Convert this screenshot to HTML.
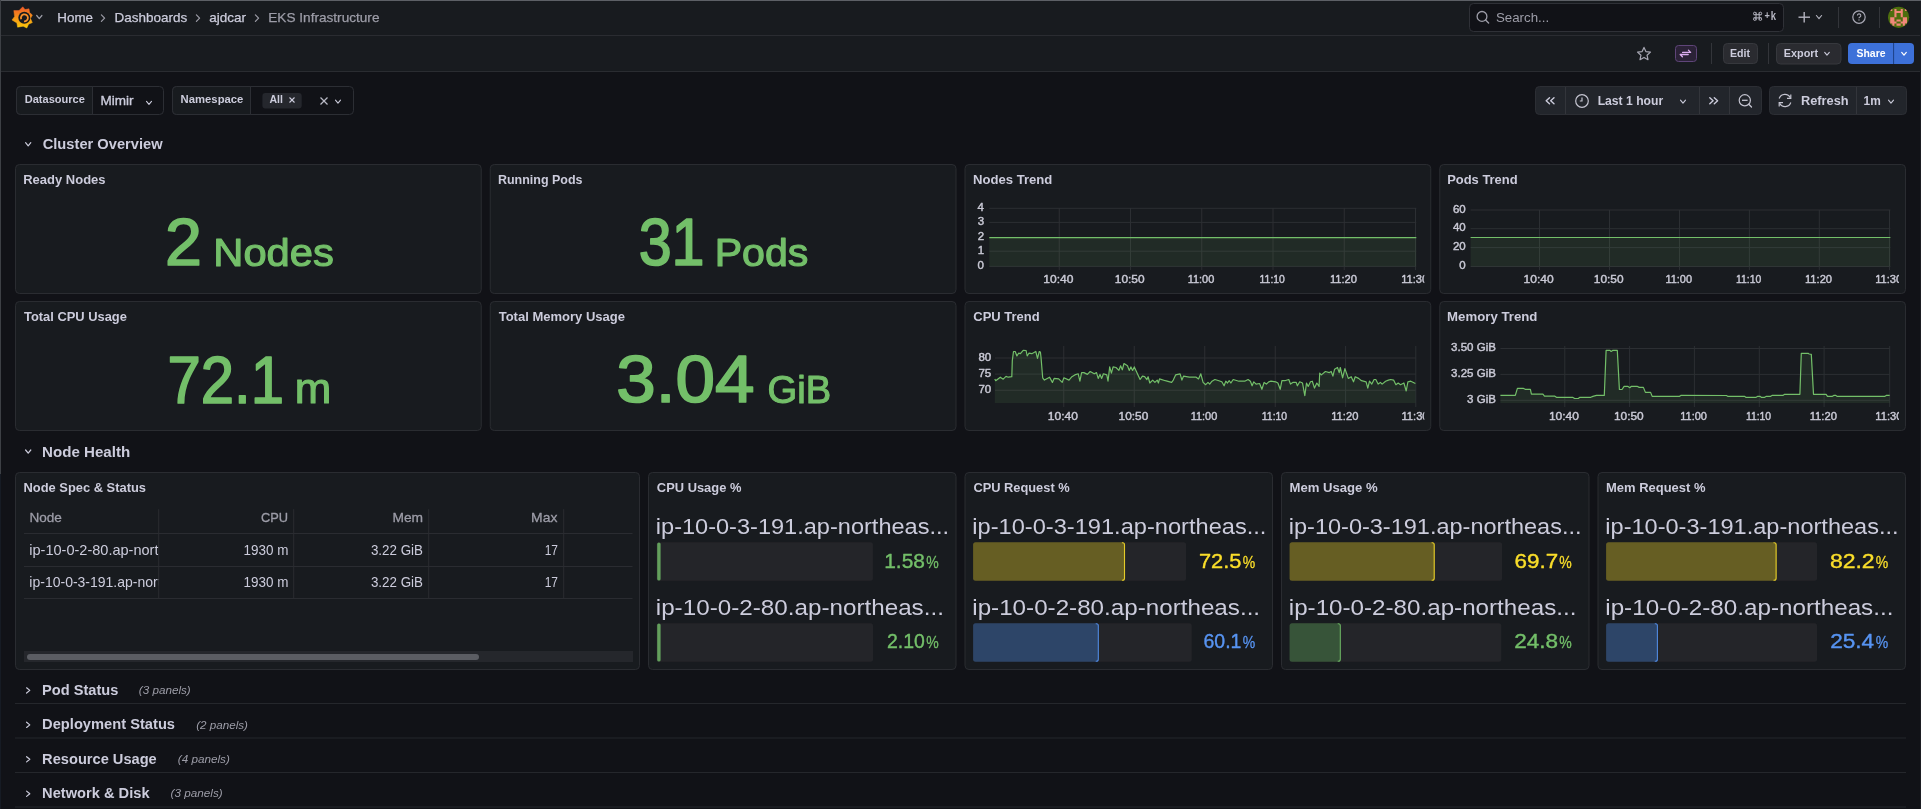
<!DOCTYPE html>
<html><head><meta charset="utf-8"><title>EKS Infrastructure - Dashboards - Grafana</title>
<style>
html,body{margin:0;padding:0;background:#111217;width:1921px;height:809px;overflow:hidden}
svg{display:block;font-family:"Liberation Sans", sans-serif;will-change:transform}
</style></head><body>
<svg width="1921" height="809" viewBox="0 0 1921 809">
<rect x="0" y="0" width="1921" height="809" fill="#111217"/>
<rect x="0" y="0" width="1921" height="71" fill="#181b1f"/>
<line x1="0" y1="35.5" x2="1921" y2="35.5" stroke="#2a2c31" stroke-width="1"/>
<line x1="0" y1="71.5" x2="1921" y2="71.5" stroke="#2a2c31" stroke-width="1"/>
<line x1="0" y1="0.5" x2="1921" y2="0.5" stroke="#5d6066" stroke-width="1"/>
<line x1="0.5" y1="0" x2="0.5" y2="474" stroke="#3d4045" stroke-width="1"/>
<line x1="0.5" y1="474" x2="0.5" y2="809" stroke="#161b24" stroke-width="1"/>
<defs><linearGradient id="lg" x1="0" y1="0" x2="0" y2="1"><stop offset="0" stop-color="#f05a28"/><stop offset="1" stop-color="#fbca0a"/></linearGradient></defs>
<polygon points="22.80,6.80 25.00,9.60 29.00,8.80 29.60,12.60 32.40,15.00 30.50,18.60 32.30,22.60 28.60,24.20 26.80,28.00 23.20,26.20 17.60,27.20 16.90,23.00 12.00,20.00 14.60,16.60 13.80,10.60 19.00,10.60" fill="url(#lg)" stroke="url(#lg)" stroke-width="0.5" stroke-linejoin="round"/>
<circle cx="24.3" cy="17.7" r="6.0" fill="#181b1f"/>
<path d="M21.18 19.27 A3.5 3.5 0 1 1 24.03 21.38" fill="none" stroke="#f7902a" stroke-width="1.8"/>
<circle cx="24.6" cy="18.1" r="1.8" fill="#181b1f"/>
<path d="M36.699999999999996 15.500000000000002 L39.3 18.700000000000003 L41.9 15.500000000000002" fill="none" stroke="#9d9da8" stroke-width="1.2" stroke-linecap="round" stroke-linejoin="round"/>
<text x="57.32" y="21.50" font-size="13.60" font-weight="normal" font-style="normal" fill="#ccccdc" stroke="#ccccdc" stroke-width="0.25" stroke-linejoin="round" textLength="35.62" lengthAdjust="spacingAndGlyphs">Home</text>
<path d="M101.4 14.900000000000002 L104.6 18.1 L101.4 21.3" fill="none" stroke="#9d9da8" stroke-width="1.2" stroke-linecap="round" stroke-linejoin="round"/>
<text x="114.61" y="21.50" font-size="13.60" font-weight="normal" font-style="normal" fill="#ccccdc" stroke="#ccccdc" stroke-width="0.25" stroke-linejoin="round" textLength="72.73" lengthAdjust="spacingAndGlyphs">Dashboards</text>
<path d="M196.4 14.900000000000002 L199.6 18.1 L196.4 21.3" fill="none" stroke="#9d9da8" stroke-width="1.2" stroke-linecap="round" stroke-linejoin="round"/>
<text x="209.35" y="21.50" font-size="13.60" font-weight="normal" font-style="normal" fill="#ccccdc" stroke="#ccccdc" stroke-width="0.25" stroke-linejoin="round" textLength="36.74" lengthAdjust="spacingAndGlyphs">ajdcar</text>
<path d="M255.4 14.900000000000002 L258.6 18.1 L255.4 21.3" fill="none" stroke="#9d9da8" stroke-width="1.2" stroke-linecap="round" stroke-linejoin="round"/>
<text x="268.30" y="21.50" font-size="13.60" font-weight="normal" font-style="normal" fill="#9d9da8" stroke="#9d9da8" stroke-width="0.25" stroke-linejoin="round" textLength="111.15" lengthAdjust="spacingAndGlyphs">EKS Infrastructure</text>
<rect x="1469.5" y="3.5" width="314" height="28" fill="#111217" rx="4" stroke="#2f3137" stroke-width="1"/>
<circle cx="1482" cy="16.4" r="4.9" fill="none" stroke="#9d9da8" stroke-width="1.3"/>
<line x1="1485.6" y1="20" x2="1488.6" y2="23" stroke="#9d9da8" stroke-width="1.4" stroke-linecap="round"/>
<text x="1495.90" y="21.70" font-size="13.40" font-weight="normal" font-style="normal" fill="#9d9da8" textLength="53.29" lengthAdjust="spacingAndGlyphs">Search...</text>
<path d="M1756.0 12.3 V20.3 M1759.1999999999998 12.3 V20.3 M1753.6 14.700000000000001 H1761.6 M1753.6 17.900000000000002 H1761.6" fill="none" stroke="#b8b8c4" stroke-width="1.0"/>
<circle cx="1754.75" cy="13.45" r="1.25" fill="#111217" stroke="#b8b8c4" stroke-width="1"/>
<circle cx="1754.75" cy="19.15" r="1.25" fill="#111217" stroke="#b8b8c4" stroke-width="1"/>
<circle cx="1760.45" cy="13.45" r="1.25" fill="#111217" stroke="#b8b8c4" stroke-width="1"/>
<circle cx="1760.45" cy="19.15" r="1.25" fill="#111217" stroke="#b8b8c4" stroke-width="1"/>
<text x="1764.61" y="19.20" font-size="11.00" font-weight="bold" font-style="normal" fill="#b8b8c4" textLength="5.37" lengthAdjust="spacingAndGlyphs">+</text>
<text x="1770.74" y="19.90" font-size="12.00" font-weight="bold" font-style="normal" fill="#b8b8c4" textLength="5.25" lengthAdjust="spacingAndGlyphs">k</text>
<line x1="1798.5" y1="17.2" x2="1810" y2="17.2" stroke="#b3b3be" stroke-width="1.4"/>
<line x1="1804.2" y1="12" x2="1804.2" y2="22.5" stroke="#b3b3be" stroke-width="1.4"/>
<path d="M1816.4 15.500000000000002 L1819 18.700000000000003 L1821.6 15.500000000000002" fill="none" stroke="#b3b3be" stroke-width="1.1" stroke-linecap="round" stroke-linejoin="round"/>
<line x1="1838.5" y1="7" x2="1838.5" y2="28" stroke="#33353a" stroke-width="1"/>
<circle cx="1859" cy="17.1" r="6.2" fill="none" stroke="#a8a8b4" stroke-width="1.2"/>
<path d="M1857.4 15.6 a1.7 1.7 0 1 1 2.2 1.6 c-0.5 0.2 -0.6 0.5 -0.6 1.0" fill="none" stroke="#a8a8b4" stroke-width="1.1"/>
<circle cx="1859" cy="20.0" r="0.65" fill="#a8a8b4"/>
<line x1="1879.5" y1="7" x2="1879.5" y2="28" stroke="#33353a" stroke-width="1"/>
<clipPath id="av"><circle cx="1898.6" cy="17.3" r="10.6"/></clipPath>
<g clip-path="url(#av)"><rect x="1887" y="6" width="23" height="23" fill="#4e6e0e"/>
<path d="M1890.20 8.90h2.10v2.10h-2.10zM1894.40 8.90h2.10v2.10h-2.10zM1900.70 8.90h2.10v2.10h-2.10zM1904.90 8.90h2.10v2.10h-2.10zM1894.40 11.00h8.40v2.10h-8.40zM1894.40 13.10h2.10v2.10h-2.10zM1900.70 13.10h2.10v2.10h-2.10zM1894.40 15.20h2.10v2.10h-2.10zM1900.70 15.20h2.10v2.10h-2.10zM1890.20 17.30h4.20v2.10h-4.20zM1902.80 17.30h4.20v2.10h-4.20zM1890.20 19.40h4.20v2.10h-4.20zM1896.50 19.40h4.20v2.10h-4.20zM1902.80 19.40h4.20v2.10h-4.20zM1890.20 21.50h6.30v2.10h-6.30zM1900.70 21.50h6.30v2.10h-6.30zM1892.30 23.60h2.10v2.10h-2.10zM1896.50 23.60h4.20v2.10h-4.20zM1902.80 23.60h2.10v2.10h-2.10z" fill="#f2877a"/>
</g>
<polygon points="1644.00,47.40 1645.88,51.61 1650.47,52.10 1647.04,55.19 1648.00,59.70 1644.00,57.40 1640.00,59.70 1640.96,55.19 1637.53,52.10 1642.12,51.61" fill="none" stroke="#a8a8b4" stroke-width="1.2" stroke-linejoin="round"/>
<rect x="1675.5" y="45.5" width="21" height="16" fill="#2b2237" rx="3" stroke="#5f4579" stroke-width="1"/>
<path d="M1682.6 52.4 H1690.6 L1688.4 50.1 M1688.2 54.5 H1680.2 L1682.4 56.8" fill="none" stroke="#dcaef0" stroke-width="1.3" stroke-linecap="round" stroke-linejoin="round"/>
<line x1="1711.5" y1="43" x2="1711.5" y2="64" stroke="#33353a" stroke-width="1"/>
<rect x="1723.5" y="43.5" width="34" height="20" fill="#2a2b30" rx="4" stroke="#36383d" stroke-width="1"/>
<text x="1729.88" y="56.90" font-size="11.00" font-weight="bold" font-style="normal" fill="#ccccdc" textLength="20.06" lengthAdjust="spacingAndGlyphs">Edit</text>
<line x1="1768.5" y1="43" x2="1768.5" y2="64" stroke="#33353a" stroke-width="1"/>
<rect x="1776.5" y="43.5" width="64.5" height="20.5" fill="#2a2b30" rx="4" stroke="#36383d" stroke-width="1"/>
<text x="1783.77" y="56.90" font-size="11.00" font-weight="bold" font-style="normal" fill="#ccccdc" textLength="34.36" lengthAdjust="spacingAndGlyphs">Export</text>
<path d="M1824.7 52.4 L1827 55.199999999999996 L1829.3 52.4" fill="none" stroke="#ccccdc" stroke-width="1.1" stroke-linecap="round" stroke-linejoin="round"/>
<rect x="1848" y="43" width="66" height="21" fill="#3d71d9" rx="4"/>
<line x1="1893.6" y1="43" x2="1893.6" y2="64" stroke="#1d3f86" stroke-width="1"/>
<text x="1856.49" y="56.90" font-size="11.00" font-weight="bold" font-style="normal" fill="#ffffff" textLength="29.07" lengthAdjust="spacingAndGlyphs">Share</text>
<path d="M1901.7 52.4 L1904 55.199999999999996 L1906.3 52.4" fill="none" stroke="#ffffff" stroke-width="1.2" stroke-linecap="round" stroke-linejoin="round"/>
<rect x="16.5" y="86.5" width="147" height="28" fill="#111217" rx="4" stroke="#2c2e34" stroke-width="1"/>
<path d="M20.5 86.5 H92.5 V114.5 H20.5 A4 4 0 0 1 16.5 110.5 V90.5 A4 4 0 0 1 20.5 86.5 Z" fill="#181b1f" stroke="#2c2e34" stroke-width="1"/>
<text x="24.75" y="103.10" font-size="11.00" font-weight="bold" font-style="normal" fill="#ccccdc" textLength="60.13" lengthAdjust="spacingAndGlyphs">Datasource</text>
<text x="100.46" y="104.80" font-size="13.20" font-weight="normal" font-style="normal" fill="#ccccdc" stroke="#ccccdc" stroke-width="0.35" stroke-linejoin="round" textLength="33.08" lengthAdjust="spacingAndGlyphs">Mimir</text>
<path d="M146.5 101.3 L149 104.3 L151.5 101.3" fill="none" stroke="#ccccdc" stroke-width="1.1" stroke-linecap="round" stroke-linejoin="round"/>
<rect x="172.5" y="86.5" width="181" height="28" fill="#111217" rx="4" stroke="#2c2e34" stroke-width="1"/>
<path d="M176.5 86.5 H250.5 V114.5 H176.5 A4 4 0 0 1 172.5 110.5 V90.5 A4 4 0 0 1 176.5 86.5 Z" fill="#181b1f" stroke="#2c2e34" stroke-width="1"/>
<text x="180.64" y="103.10" font-size="11.00" font-weight="bold" font-style="normal" fill="#ccccdc" textLength="62.75" lengthAdjust="spacingAndGlyphs">Namespace</text>
<rect x="262.4" y="93" width="39.3" height="15.6" fill="#25272d" rx="3"/>
<text x="269.44" y="102.80" font-size="11.00" font-weight="bold" font-style="normal" fill="#ccccdc" textLength="13.51" lengthAdjust="spacingAndGlyphs">All</text>
<line x1="289.5" y1="97.5" x2="294.5" y2="102.5" stroke="#ccccdc" stroke-width="1.1"/>
<line x1="294.5" y1="97.5" x2="289.5" y2="102.5" stroke="#ccccdc" stroke-width="1.1"/>
<line x1="320.5" y1="97.5" x2="327.5" y2="104.5" stroke="#b8b8c4" stroke-width="1.2"/>
<line x1="327.5" y1="97.5" x2="320.5" y2="104.5" stroke="#b8b8c4" stroke-width="1.2"/>
<path d="M335.5 100.1 L338 103.1 L340.5 100.1" fill="none" stroke="#ccccdc" stroke-width="1.1" stroke-linecap="round" stroke-linejoin="round"/>
<rect x="1535.5" y="86.5" width="226" height="28" fill="#22252b" rx="4" stroke="#2c2e34" stroke-width="1"/>
<line x1="1565.5" y1="87" x2="1565.5" y2="114" stroke="#33353b" stroke-width="1"/>
<line x1="1699.5" y1="87" x2="1699.5" y2="114" stroke="#33353b" stroke-width="1"/>
<line x1="1729.5" y1="87" x2="1729.5" y2="114" stroke="#33353b" stroke-width="1"/>
<path d="M1549.5 97.8 L1546.2 100.8 L1549.5 103.8 M1554 97.8 L1550.7 100.8 L1554 103.8" fill="none" stroke="#ccccdc" stroke-width="1.4" stroke-linecap="round" stroke-linejoin="round"/>
<circle cx="1582" cy="101" r="6.3" fill="none" stroke="#c4c4d0" stroke-width="1.2"/>
<path d="M1582 97.5 V101 H1579.8" fill="none" stroke="#c4c4d0" stroke-width="1.2"/>
<text x="1597.68" y="104.60" font-size="13.00" font-weight="bold" font-style="normal" fill="#ccccdc" textLength="65.50" lengthAdjust="spacingAndGlyphs">Last 1 hour</text>
<path d="M1680.5 100.1 L1683 103.1 L1685.5 100.1" fill="none" stroke="#ccccdc" stroke-width="1.1" stroke-linecap="round" stroke-linejoin="round"/>
<path d="M1709.8 97.8 L1713.1 100.8 L1709.8 103.8 M1714.3 97.8 L1717.6 100.8 L1714.3 103.8" fill="none" stroke="#ccccdc" stroke-width="1.4" stroke-linecap="round" stroke-linejoin="round"/>
<circle cx="1744.8" cy="100.3" r="5.6" fill="none" stroke="#c4c4d0" stroke-width="1.2"/>
<line x1="1742" y1="100.3" x2="1747.6" y2="100.3" stroke="#c4c4d0" stroke-width="1.3"/>
<line x1="1748.8" y1="104.3" x2="1751.5" y2="107" stroke="#c4c4d0" stroke-width="1.3" stroke-linecap="round"/>
<rect x="1769.5" y="86.5" width="137" height="28" fill="#22252b" rx="4" stroke="#2c2e34" stroke-width="1"/>
<line x1="1856.5" y1="87" x2="1856.5" y2="114" stroke="#33353b" stroke-width="1"/>
<path d="M1779.2 98.5 A6 6 0 0 1 1790.3 97.8 M1790.8 102.5 A6 6 0 0 1 1779.7 103.2" fill="none" stroke="#c4c4d0" stroke-width="1.2"/>
<path d="M1790.8 94.5 V98.3 H1787" fill="none" stroke="#c4c4d0" stroke-width="1.2"/>
<path d="M1779.2 106.5 V102.7 H1783" fill="none" stroke="#c4c4d0" stroke-width="1.2"/>
<text x="1800.94" y="104.60" font-size="13.00" font-weight="bold" font-style="normal" fill="#ccccdc" textLength="47.65" lengthAdjust="spacingAndGlyphs">Refresh</text>
<text x="1863.56" y="104.60" font-size="13.00" font-weight="bold" font-style="normal" fill="#ccccdc" textLength="17.19" lengthAdjust="spacingAndGlyphs">1m</text>
<path d="M1888.5 100.1 L1891 103.1 L1893.5 100.1" fill="none" stroke="#ccccdc" stroke-width="1.1" stroke-linecap="round" stroke-linejoin="round"/>
<path d="M25.599999999999998 142.6 L28.2 145.79999999999998 L30.8 142.6" fill="none" stroke="#ccccdc" stroke-width="1.2" stroke-linecap="round" stroke-linejoin="round"/>
<text x="42.71" y="148.50" font-size="15.00" font-weight="bold" font-style="normal" fill="#ccccdc" textLength="119.86" lengthAdjust="spacingAndGlyphs">Cluster Overview</text>
<path d="M25.599999999999998 450.0 L28.2 453.20000000000005 L30.8 450.0" fill="none" stroke="#ccccdc" stroke-width="1.2" stroke-linecap="round" stroke-linejoin="round"/>
<text x="42.08" y="456.60" font-size="15.00" font-weight="bold" font-style="normal" fill="#ccccdc" textLength="88.15" lengthAdjust="spacingAndGlyphs">Node Health</text>
<path d="M26.599999999999998 687.8000000000001 L29.8 690.4000000000001 L26.599999999999998 693.0000000000001" fill="none" stroke="#ccccdc" stroke-width="1.2" stroke-linecap="round" stroke-linejoin="round"/>
<text x="42.11" y="694.80" font-size="15.00" font-weight="bold" font-style="normal" fill="#ccccdc" textLength="76.27" lengthAdjust="spacingAndGlyphs">Pod Status</text>
<text x="138.85" y="694.10" font-size="11.50" font-weight="normal" font-style="italic" fill="#9d9da8" textLength="51.85" lengthAdjust="spacingAndGlyphs">(3 panels)</text>
<line x1="15" y1="703.5" x2="1906" y2="703.5" stroke="#25272c" stroke-width="1"/>
<path d="M26.599999999999998 722.2500000000001 L29.8 724.8500000000001 L26.599999999999998 727.4500000000002" fill="none" stroke="#ccccdc" stroke-width="1.2" stroke-linecap="round" stroke-linejoin="round"/>
<text x="42.11" y="729.25" font-size="15.00" font-weight="bold" font-style="normal" fill="#ccccdc" textLength="132.91" lengthAdjust="spacingAndGlyphs">Deployment Status</text>
<text x="196.15" y="728.55" font-size="11.50" font-weight="normal" font-style="italic" fill="#9d9da8" textLength="51.85" lengthAdjust="spacingAndGlyphs">(2 panels)</text>
<line x1="15" y1="738.0" x2="1906" y2="738.0" stroke="#25272c" stroke-width="1"/>
<path d="M26.599999999999998 756.7 L29.8 759.3000000000001 L26.599999999999998 761.9000000000001" fill="none" stroke="#ccccdc" stroke-width="1.2" stroke-linecap="round" stroke-linejoin="round"/>
<text x="42.11" y="763.70" font-size="15.00" font-weight="bold" font-style="normal" fill="#ccccdc" textLength="114.64" lengthAdjust="spacingAndGlyphs">Resource Usage</text>
<text x="177.74" y="763.00" font-size="11.50" font-weight="normal" font-style="italic" fill="#9d9da8" textLength="52.15" lengthAdjust="spacingAndGlyphs">(4 panels)</text>
<line x1="15" y1="772.5" x2="1906" y2="772.5" stroke="#25272c" stroke-width="1"/>
<path d="M26.599999999999998 791.1500000000001 L29.8 793.7500000000001 L26.599999999999998 796.3500000000001" fill="none" stroke="#ccccdc" stroke-width="1.2" stroke-linecap="round" stroke-linejoin="round"/>
<text x="42.11" y="798.15" font-size="15.00" font-weight="bold" font-style="normal" fill="#ccccdc" textLength="107.46" lengthAdjust="spacingAndGlyphs">Network &amp; Disk</text>
<text x="170.64" y="797.45" font-size="11.50" font-weight="normal" font-style="italic" fill="#9d9da8" textLength="52.05" lengthAdjust="spacingAndGlyphs">(3 panels)</text>
<line x1="15" y1="807.0" x2="1906" y2="807.0" stroke="#25272c" stroke-width="1"/>
<rect x="15.50" y="164.5" width="465.75" height="129" fill="#181b1f" rx="4" stroke="#2a2c31" stroke-width="1"/>
<rect x="490.25" y="164.5" width="465.75" height="129" fill="#181b1f" rx="4" stroke="#2a2c31" stroke-width="1"/>
<rect x="965.00" y="164.5" width="465.75" height="129" fill="#181b1f" rx="4" stroke="#2a2c31" stroke-width="1"/>
<rect x="1439.75" y="164.5" width="465.75" height="129" fill="#181b1f" rx="4" stroke="#2a2c31" stroke-width="1"/>
<rect x="15.50" y="301.5" width="465.75" height="129" fill="#181b1f" rx="4" stroke="#2a2c31" stroke-width="1"/>
<rect x="490.25" y="301.5" width="465.75" height="129" fill="#181b1f" rx="4" stroke="#2a2c31" stroke-width="1"/>
<rect x="965.00" y="301.5" width="465.75" height="129" fill="#181b1f" rx="4" stroke="#2a2c31" stroke-width="1"/>
<rect x="1439.75" y="301.5" width="465.75" height="129" fill="#181b1f" rx="4" stroke="#2a2c31" stroke-width="1"/>
<text x="23.22" y="183.70" font-size="13.00" font-weight="bold" font-style="normal" fill="#ccccdc" textLength="82.31" lengthAdjust="spacingAndGlyphs">Ready Nodes</text>
<text x="497.96" y="183.70" font-size="13.00" font-weight="bold" font-style="normal" fill="#ccccdc" textLength="84.57" lengthAdjust="spacingAndGlyphs">Running Pods</text>
<text x="972.91" y="183.70" font-size="13.00" font-weight="bold" font-style="normal" fill="#ccccdc" textLength="79.46" lengthAdjust="spacingAndGlyphs">Nodes Trend</text>
<text x="1447.13" y="183.70" font-size="13.00" font-weight="bold" font-style="normal" fill="#ccccdc" textLength="70.52" lengthAdjust="spacingAndGlyphs">Pods Trend</text>
<text x="23.97" y="320.70" font-size="13.00" font-weight="bold" font-style="normal" fill="#ccccdc" textLength="102.96" lengthAdjust="spacingAndGlyphs">Total CPU Usage</text>
<text x="498.67" y="320.70" font-size="13.00" font-weight="bold" font-style="normal" fill="#ccccdc" textLength="126.37" lengthAdjust="spacingAndGlyphs">Total Memory Usage</text>
<text x="973.28" y="320.70" font-size="13.00" font-weight="bold" font-style="normal" fill="#ccccdc" textLength="66.34" lengthAdjust="spacingAndGlyphs">CPU Trend</text>
<text x="1447.11" y="320.70" font-size="13.00" font-weight="bold" font-style="normal" fill="#ccccdc" textLength="90.25" lengthAdjust="spacingAndGlyphs">Memory Trend</text>
<text x="165.03" y="265.35" font-size="66.67" font-weight="normal" font-style="normal" fill="#73bf69" stroke="#73bf69" stroke-width="1.7" stroke-linejoin="round" textLength="36.92" lengthAdjust="spacingAndGlyphs">2</text>
<text x="213.31" y="265.65" font-size="38.48" font-weight="normal" font-style="normal" fill="#73bf69" stroke="#73bf69" stroke-width="1.1" stroke-linejoin="round" textLength="120.53" lengthAdjust="spacingAndGlyphs">Nodes</text>
<text x="638.63" y="265.40" font-size="66.74" font-weight="normal" font-style="normal" fill="#73bf69" stroke="#73bf69" stroke-width="1.7" stroke-linejoin="round" textLength="65.98" lengthAdjust="spacingAndGlyphs">31</text>
<text x="714.66" y="265.70" font-size="38.14" font-weight="normal" font-style="normal" fill="#73bf69" stroke="#73bf69" stroke-width="1.1" stroke-linejoin="round" textLength="93.70" lengthAdjust="spacingAndGlyphs">Pods</text>
<text x="167.46" y="402.85" font-size="67.10" font-weight="normal" font-style="normal" fill="#73bf69" stroke="#73bf69" stroke-width="1.7" stroke-linejoin="round" textLength="116.52" lengthAdjust="spacingAndGlyphs">72.1</text>
<text x="294.79" y="403.15" font-size="41.67" font-weight="normal" font-style="normal" fill="#73bf69" stroke="#73bf69" stroke-width="1.1" stroke-linejoin="round" textLength="36.53" lengthAdjust="spacingAndGlyphs">m</text>
<text x="616.39" y="402.25" font-size="66.52" font-weight="normal" font-style="normal" fill="#73bf69" stroke="#73bf69" stroke-width="1.7" stroke-linejoin="round" textLength="138.11" lengthAdjust="spacingAndGlyphs">3.04</text>
<text x="767.54" y="402.55" font-size="38.48" font-weight="normal" font-style="normal" fill="#73bf69" stroke="#73bf69" stroke-width="1.1" stroke-linejoin="round" textLength="63.59" lengthAdjust="spacingAndGlyphs">GiB</text>
<clipPath id="cp00"><rect x="15.00" y="164" width="459.75" height="130"/></clipPath>
<clipPath id="cp01"><rect x="489.75" y="164" width="459.75" height="130"/></clipPath>
<clipPath id="cp02"><rect x="964.50" y="164" width="459.75" height="130"/></clipPath>
<clipPath id="cp03"><rect x="1439.25" y="164" width="459.75" height="130"/></clipPath>
<clipPath id="cp10"><rect x="15.00" y="301" width="459.75" height="130"/></clipPath>
<clipPath id="cp11"><rect x="489.75" y="301" width="459.75" height="130"/></clipPath>
<clipPath id="cp12"><rect x="964.50" y="301" width="459.75" height="130"/></clipPath>
<clipPath id="cp13"><rect x="1439.25" y="301" width="459.75" height="130"/></clipPath>
<line x1="989.3" y1="208.30" x2="1416.3" y2="208.30" stroke="#2c2f33" stroke-width="1"/>
<text x="977.51" y="211.00" font-size="11.50" font-weight="normal" font-style="normal" fill="#c8c8d4" stroke="#c8c8d4" stroke-width="0.45" stroke-linejoin="round">4</text>
<line x1="989.3" y1="222.40" x2="1416.3" y2="222.40" stroke="#2c2f33" stroke-width="1"/>
<text x="977.68" y="225.10" font-size="11.50" font-weight="normal" font-style="normal" fill="#c8c8d4" stroke="#c8c8d4" stroke-width="0.45" stroke-linejoin="round">3</text>
<line x1="989.3" y1="237.60" x2="1416.3" y2="237.60" stroke="#2c2f33" stroke-width="1"/>
<text x="977.77" y="240.30" font-size="11.50" font-weight="normal" font-style="normal" fill="#c8c8d4" stroke="#c8c8d4" stroke-width="0.45" stroke-linejoin="round">2</text>
<line x1="989.3" y1="251.20" x2="1416.3" y2="251.20" stroke="#2c2f33" stroke-width="1"/>
<text x="977.74" y="253.90" font-size="11.50" font-weight="normal" font-style="normal" fill="#c8c8d4" stroke="#c8c8d4" stroke-width="0.45" stroke-linejoin="round">1</text>
<line x1="989.3" y1="266.40" x2="1416.3" y2="266.40" stroke="#2c2f33" stroke-width="1"/>
<text x="977.62" y="269.10" font-size="11.50" font-weight="normal" font-style="normal" fill="#c8c8d4" stroke="#c8c8d4" stroke-width="0.45" stroke-linejoin="round">0</text>
<line x1="1059.25" y1="208" x2="1059.25" y2="270" stroke="#2c2f33" stroke-width="1"/>
<line x1="1130.50" y1="208" x2="1130.50" y2="270" stroke="#2c2f33" stroke-width="1"/>
<line x1="1201.75" y1="208" x2="1201.75" y2="270" stroke="#2c2f33" stroke-width="1"/>
<line x1="1273.00" y1="208" x2="1273.00" y2="270" stroke="#2c2f33" stroke-width="1"/>
<line x1="1344.25" y1="208" x2="1344.25" y2="270" stroke="#2c2f33" stroke-width="1"/>
<line x1="1415.50" y1="208" x2="1415.50" y2="270" stroke="#2c2f33" stroke-width="1"/>
<g clip-path="url(#cp02)">
<text x="1043.37" y="282.70" font-size="11.50" font-weight="normal" font-style="normal" fill="#c8c8d4" stroke="#c8c8d4" stroke-width="0.45" stroke-linejoin="round" textLength="30.10" lengthAdjust="spacingAndGlyphs">10:40</text>
</g>
<g clip-path="url(#cp02)">
<text x="1114.84" y="282.70" font-size="11.50" font-weight="normal" font-style="normal" fill="#c8c8d4" stroke="#c8c8d4" stroke-width="0.45" stroke-linejoin="round" textLength="29.68" lengthAdjust="spacingAndGlyphs">10:50</text>
</g>
<g clip-path="url(#cp02)">
<text x="1187.65" y="282.70" font-size="11.50" font-weight="normal" font-style="normal" fill="#c8c8d4" stroke="#c8c8d4" stroke-width="0.45" stroke-linejoin="round" textLength="26.59" lengthAdjust="spacingAndGlyphs">11:00</text>
</g>
<g clip-path="url(#cp02)">
<text x="1259.60" y="282.70" font-size="11.50" font-weight="normal" font-style="normal" fill="#c8c8d4" stroke="#c8c8d4" stroke-width="0.45" stroke-linejoin="round" textLength="25.23" lengthAdjust="spacingAndGlyphs">11:10</text>
</g>
<g clip-path="url(#cp02)">
<text x="1329.89" y="282.70" font-size="11.50" font-weight="normal" font-style="normal" fill="#c8c8d4" stroke="#c8c8d4" stroke-width="0.45" stroke-linejoin="round" textLength="27.12" lengthAdjust="spacingAndGlyphs">11:20</text>
</g>
<g clip-path="url(#cp02)">
<text x="1401.14" y="282.70" font-size="11.50" font-weight="normal" font-style="normal" fill="#c8c8d4" stroke="#c8c8d4" stroke-width="0.45" stroke-linejoin="round" textLength="27.12" lengthAdjust="spacingAndGlyphs">11:30</text>
</g>
<path d="M989.30 237.60 L1416.30 237.60 L1416.30 266.4 L989.30 266.4 Z" fill="#73bf69" fill-opacity="0.1"/>
<path d="M989.30 237.60 L1416.30 237.60" fill="none" stroke="#73bf69" stroke-width="1.2" stroke-linejoin="round"/>
<line x1="1470.6" y1="210.00" x2="1890.4" y2="210.00" stroke="#2c2f33" stroke-width="1"/>
<text x="1452.94" y="212.70" font-size="11.50" font-weight="normal" font-style="normal" fill="#c8c8d4" stroke="#c8c8d4" stroke-width="0.45" stroke-linejoin="round">60</text>
<line x1="1470.6" y1="228.70" x2="1890.4" y2="228.70" stroke="#2c2f33" stroke-width="1"/>
<text x="1452.94" y="231.40" font-size="11.50" font-weight="normal" font-style="normal" fill="#c8c8d4" stroke="#c8c8d4" stroke-width="0.45" stroke-linejoin="round">40</text>
<line x1="1470.6" y1="247.60" x2="1890.4" y2="247.60" stroke="#2c2f33" stroke-width="1"/>
<text x="1452.94" y="250.30" font-size="11.50" font-weight="normal" font-style="normal" fill="#c8c8d4" stroke="#c8c8d4" stroke-width="0.45" stroke-linejoin="round">20</text>
<line x1="1470.6" y1="266.50" x2="1890.4" y2="266.50" stroke="#2c2f33" stroke-width="1"/>
<text x="1459.32" y="269.20" font-size="11.50" font-weight="normal" font-style="normal" fill="#c8c8d4" stroke="#c8c8d4" stroke-width="0.45" stroke-linejoin="round">0</text>
<line x1="1539.50" y1="210" x2="1539.50" y2="270" stroke="#2c2f33" stroke-width="1"/>
<line x1="1609.50" y1="210" x2="1609.50" y2="270" stroke="#2c2f33" stroke-width="1"/>
<line x1="1679.50" y1="210" x2="1679.50" y2="270" stroke="#2c2f33" stroke-width="1"/>
<line x1="1749.40" y1="210" x2="1749.40" y2="270" stroke="#2c2f33" stroke-width="1"/>
<line x1="1819.30" y1="210" x2="1819.30" y2="270" stroke="#2c2f33" stroke-width="1"/>
<line x1="1889.50" y1="210" x2="1889.50" y2="270" stroke="#2c2f33" stroke-width="1"/>
<g clip-path="url(#cp03)">
<text x="1523.62" y="282.70" font-size="11.50" font-weight="normal" font-style="normal" fill="#c8c8d4" stroke="#c8c8d4" stroke-width="0.45" stroke-linejoin="round" textLength="30.10" lengthAdjust="spacingAndGlyphs">10:40</text>
</g>
<g clip-path="url(#cp03)">
<text x="1593.84" y="282.70" font-size="11.50" font-weight="normal" font-style="normal" fill="#c8c8d4" stroke="#c8c8d4" stroke-width="0.45" stroke-linejoin="round" textLength="29.68" lengthAdjust="spacingAndGlyphs">10:50</text>
</g>
<g clip-path="url(#cp03)">
<text x="1665.40" y="282.70" font-size="11.50" font-weight="normal" font-style="normal" fill="#c8c8d4" stroke="#c8c8d4" stroke-width="0.45" stroke-linejoin="round" textLength="26.59" lengthAdjust="spacingAndGlyphs">11:00</text>
</g>
<g clip-path="url(#cp03)">
<text x="1736.00" y="282.70" font-size="11.50" font-weight="normal" font-style="normal" fill="#c8c8d4" stroke="#c8c8d4" stroke-width="0.45" stroke-linejoin="round" textLength="25.23" lengthAdjust="spacingAndGlyphs">11:10</text>
</g>
<g clip-path="url(#cp03)">
<text x="1804.94" y="282.70" font-size="11.50" font-weight="normal" font-style="normal" fill="#c8c8d4" stroke="#c8c8d4" stroke-width="0.45" stroke-linejoin="round" textLength="27.12" lengthAdjust="spacingAndGlyphs">11:20</text>
</g>
<g clip-path="url(#cp03)">
<text x="1875.14" y="282.70" font-size="11.50" font-weight="normal" font-style="normal" fill="#c8c8d4" stroke="#c8c8d4" stroke-width="0.45" stroke-linejoin="round" textLength="27.12" lengthAdjust="spacingAndGlyphs">11:30</text>
</g>
<path d="M1470.60 237.50 L1890.40 237.50 L1890.40 266.5 L1470.60 266.5 Z" fill="#73bf69" fill-opacity="0.1"/>
<path d="M1470.60 237.50 L1890.40 237.50" fill="none" stroke="#73bf69" stroke-width="1.2" stroke-linejoin="round"/>
<line x1="995" y1="358.00" x2="1416" y2="358.00" stroke="#2c2f33" stroke-width="1"/>
<text x="978.44" y="360.70" font-size="11.50" font-weight="normal" font-style="normal" fill="#c8c8d4" stroke="#c8c8d4" stroke-width="0.45" stroke-linejoin="round">80</text>
<line x1="995" y1="374.10" x2="1416" y2="374.10" stroke="#2c2f33" stroke-width="1"/>
<text x="978.47" y="376.80" font-size="11.50" font-weight="normal" font-style="normal" fill="#c8c8d4" stroke="#c8c8d4" stroke-width="0.45" stroke-linejoin="round">75</text>
<line x1="995" y1="390.25" x2="1416" y2="390.25" stroke="#2c2f33" stroke-width="1"/>
<text x="978.44" y="392.95" font-size="11.50" font-weight="normal" font-style="normal" fill="#c8c8d4" stroke="#c8c8d4" stroke-width="0.45" stroke-linejoin="round">70</text>
<line x1="1063.75" y1="346" x2="1063.75" y2="407" stroke="#2c2f33" stroke-width="1"/>
<line x1="1134.25" y1="346" x2="1134.25" y2="407" stroke="#2c2f33" stroke-width="1"/>
<line x1="1204.75" y1="346" x2="1204.75" y2="407" stroke="#2c2f33" stroke-width="1"/>
<line x1="1275.25" y1="346" x2="1275.25" y2="407" stroke="#2c2f33" stroke-width="1"/>
<line x1="1345.60" y1="346" x2="1345.60" y2="407" stroke="#2c2f33" stroke-width="1"/>
<line x1="1415.80" y1="346" x2="1415.80" y2="407" stroke="#2c2f33" stroke-width="1"/>
<g clip-path="url(#cp12)">
<text x="1047.87" y="419.70" font-size="11.50" font-weight="normal" font-style="normal" fill="#c8c8d4" stroke="#c8c8d4" stroke-width="0.45" stroke-linejoin="round" textLength="30.10" lengthAdjust="spacingAndGlyphs">10:40</text>
</g>
<g clip-path="url(#cp12)">
<text x="1118.59" y="419.70" font-size="11.50" font-weight="normal" font-style="normal" fill="#c8c8d4" stroke="#c8c8d4" stroke-width="0.45" stroke-linejoin="round" textLength="29.68" lengthAdjust="spacingAndGlyphs">10:50</text>
</g>
<g clip-path="url(#cp12)">
<text x="1190.65" y="419.70" font-size="11.50" font-weight="normal" font-style="normal" fill="#c8c8d4" stroke="#c8c8d4" stroke-width="0.45" stroke-linejoin="round" textLength="26.59" lengthAdjust="spacingAndGlyphs">11:00</text>
</g>
<g clip-path="url(#cp12)">
<text x="1261.85" y="419.70" font-size="11.50" font-weight="normal" font-style="normal" fill="#c8c8d4" stroke="#c8c8d4" stroke-width="0.45" stroke-linejoin="round" textLength="25.23" lengthAdjust="spacingAndGlyphs">11:10</text>
</g>
<g clip-path="url(#cp12)">
<text x="1331.24" y="419.70" font-size="11.50" font-weight="normal" font-style="normal" fill="#c8c8d4" stroke="#c8c8d4" stroke-width="0.45" stroke-linejoin="round" textLength="27.12" lengthAdjust="spacingAndGlyphs">11:20</text>
</g>
<g clip-path="url(#cp12)">
<text x="1401.44" y="419.70" font-size="11.50" font-weight="normal" font-style="normal" fill="#c8c8d4" stroke="#c8c8d4" stroke-width="0.45" stroke-linejoin="round" textLength="27.12" lengthAdjust="spacingAndGlyphs">11:30</text>
</g>
<path d="M994.80 378.90 L995.70 380.70 L1000.30 377.20 L1003.20 379.20 L1006.00 376.40 L1008.30 377.20 L1011.80 376.70 L1012.30 360.60 L1013.50 351.50 L1015.20 351.50 L1016.90 356.00 L1018.60 353.20 L1020.40 353.70 L1023.20 350.30 L1026.10 350.50 L1027.20 356.00 L1028.90 353.20 L1031.80 353.70 L1035.80 351.50 L1037.50 358.30 L1039.30 351.50 L1040.40 352.00 L1041.00 357.20 L1042.70 377.80 L1044.40 380.10 L1049.60 377.20 L1052.40 382.40 L1054.10 378.40 L1058.70 378.90 L1062.20 382.40 L1063.90 377.80 L1069.00 380.10 L1071.90 376.70 L1074.80 374.90 L1078.20 373.80 L1079.90 381.20 L1081.60 372.60 L1083.90 372.60 L1087.40 374.40 L1090.20 371.50 L1094.20 373.80 L1096.50 372.60 L1098.20 378.40 L1100.00 374.40 L1101.70 378.40 L1103.40 373.80 L1106.80 374.90 L1108.00 381.20 L1109.70 366.90 L1111.40 373.20 L1113.10 366.90 L1116.00 367.50 L1118.90 370.40 L1120.60 365.80 L1122.30 369.80 L1124.00 363.50 L1127.50 365.80 L1129.20 370.40 L1130.90 366.90 L1132.60 370.40 L1134.30 366.90 L1140.10 379.50 L1142.40 376.10 L1144.60 376.70 L1146.90 379.50 L1148.10 376.70 L1149.80 383.00 L1152.70 380.10 L1154.90 382.40 L1157.20 380.10 L1158.40 383.00 L1159.50 378.90 L1165.30 380.70 L1171.60 382.40 L1173.30 380.10 L1175.60 374.90 L1180.10 373.80 L1181.90 380.10 L1183.60 376.10 L1189.30 377.20 L1196.20 377.20 L1198.50 378.90 L1200.80 373.80 L1203.10 382.40 L1205.70 384.70 L1208.00 382.40 L1209.70 384.10 L1212.00 381.20 L1214.90 379.50 L1218.90 380.70 L1221.80 381.80 L1224.10 385.80 L1225.80 381.20 L1227.50 383.00 L1229.20 380.70 L1230.90 383.00 L1233.20 379.50 L1238.90 381.20 L1244.70 381.20 L1248.10 379.50 L1250.40 381.20 L1252.10 385.80 L1253.80 381.80 L1256.10 384.10 L1259.60 383.50 L1261.90 389.30 L1264.10 382.40 L1266.40 384.10 L1268.70 381.80 L1271.00 381.20 L1275.60 381.80 L1277.90 383.00 L1280.20 389.30 L1281.90 380.70 L1284.80 380.70 L1288.80 379.50 L1290.50 384.10 L1292.80 382.40 L1296.20 382.40 L1297.40 385.80 L1299.70 381.80 L1302.50 383.00 L1304.80 395.60 L1306.50 383.00 L1308.20 386.40 L1310.50 381.80 L1312.30 381.20 L1314.50 388.10 L1316.80 383.00 L1319.10 386.40 L1319.70 373.20 L1321.40 374.90 L1325.40 371.50 L1329.40 372.60 L1331.20 371.50 L1332.90 376.10 L1334.60 369.20 L1337.50 367.50 L1339.20 372.60 L1340.30 367.50 L1342.60 377.80 L1344.90 368.60 L1348.30 378.40 L1351.20 376.70 L1353.50 381.80 L1355.20 376.70 L1358.60 378.40 L1361.50 380.70 L1366.10 381.80 L1367.80 388.10 L1369.50 381.20 L1371.80 384.10 L1374.10 379.50 L1375.80 379.50 L1378.10 384.10 L1380.40 382.40 L1382.10 384.10 L1385.60 381.20 L1388.40 380.10 L1390.70 379.50 L1393.60 380.10 L1395.90 384.70 L1398.20 383.00 L1400.50 384.70 L1403.90 383.00 L1406.20 391.00 L1407.90 381.80 L1410.80 381.20 L1415.40 383.50 L1415.40 403 L994.80 403 Z" fill="#73bf69" fill-opacity="0.1"/>
<path d="M994.80 378.90 L995.70 380.70 L1000.30 377.20 L1003.20 379.20 L1006.00 376.40 L1008.30 377.20 L1011.80 376.70 L1012.30 360.60 L1013.50 351.50 L1015.20 351.50 L1016.90 356.00 L1018.60 353.20 L1020.40 353.70 L1023.20 350.30 L1026.10 350.50 L1027.20 356.00 L1028.90 353.20 L1031.80 353.70 L1035.80 351.50 L1037.50 358.30 L1039.30 351.50 L1040.40 352.00 L1041.00 357.20 L1042.70 377.80 L1044.40 380.10 L1049.60 377.20 L1052.40 382.40 L1054.10 378.40 L1058.70 378.90 L1062.20 382.40 L1063.90 377.80 L1069.00 380.10 L1071.90 376.70 L1074.80 374.90 L1078.20 373.80 L1079.90 381.20 L1081.60 372.60 L1083.90 372.60 L1087.40 374.40 L1090.20 371.50 L1094.20 373.80 L1096.50 372.60 L1098.20 378.40 L1100.00 374.40 L1101.70 378.40 L1103.40 373.80 L1106.80 374.90 L1108.00 381.20 L1109.70 366.90 L1111.40 373.20 L1113.10 366.90 L1116.00 367.50 L1118.90 370.40 L1120.60 365.80 L1122.30 369.80 L1124.00 363.50 L1127.50 365.80 L1129.20 370.40 L1130.90 366.90 L1132.60 370.40 L1134.30 366.90 L1140.10 379.50 L1142.40 376.10 L1144.60 376.70 L1146.90 379.50 L1148.10 376.70 L1149.80 383.00 L1152.70 380.10 L1154.90 382.40 L1157.20 380.10 L1158.40 383.00 L1159.50 378.90 L1165.30 380.70 L1171.60 382.40 L1173.30 380.10 L1175.60 374.90 L1180.10 373.80 L1181.90 380.10 L1183.60 376.10 L1189.30 377.20 L1196.20 377.20 L1198.50 378.90 L1200.80 373.80 L1203.10 382.40 L1205.70 384.70 L1208.00 382.40 L1209.70 384.10 L1212.00 381.20 L1214.90 379.50 L1218.90 380.70 L1221.80 381.80 L1224.10 385.80 L1225.80 381.20 L1227.50 383.00 L1229.20 380.70 L1230.90 383.00 L1233.20 379.50 L1238.90 381.20 L1244.70 381.20 L1248.10 379.50 L1250.40 381.20 L1252.10 385.80 L1253.80 381.80 L1256.10 384.10 L1259.60 383.50 L1261.90 389.30 L1264.10 382.40 L1266.40 384.10 L1268.70 381.80 L1271.00 381.20 L1275.60 381.80 L1277.90 383.00 L1280.20 389.30 L1281.90 380.70 L1284.80 380.70 L1288.80 379.50 L1290.50 384.10 L1292.80 382.40 L1296.20 382.40 L1297.40 385.80 L1299.70 381.80 L1302.50 383.00 L1304.80 395.60 L1306.50 383.00 L1308.20 386.40 L1310.50 381.80 L1312.30 381.20 L1314.50 388.10 L1316.80 383.00 L1319.10 386.40 L1319.70 373.20 L1321.40 374.90 L1325.40 371.50 L1329.40 372.60 L1331.20 371.50 L1332.90 376.10 L1334.60 369.20 L1337.50 367.50 L1339.20 372.60 L1340.30 367.50 L1342.60 377.80 L1344.90 368.60 L1348.30 378.40 L1351.20 376.70 L1353.50 381.80 L1355.20 376.70 L1358.60 378.40 L1361.50 380.70 L1366.10 381.80 L1367.80 388.10 L1369.50 381.20 L1371.80 384.10 L1374.10 379.50 L1375.80 379.50 L1378.10 384.10 L1380.40 382.40 L1382.10 384.10 L1385.60 381.20 L1388.40 380.10 L1390.70 379.50 L1393.60 380.10 L1395.90 384.70 L1398.20 383.00 L1400.50 384.70 L1403.90 383.00 L1406.20 391.00 L1407.90 381.80 L1410.80 381.20 L1415.40 383.50" fill="none" stroke="#73bf69" stroke-width="1.2" stroke-linejoin="round"/>
<line x1="1500.4" y1="348.50" x2="1889.7" y2="348.50" stroke="#2c2f33" stroke-width="1"/>
<text x="1451.12" y="351.20" font-size="11.50" font-weight="normal" font-style="normal" fill="#c8c8d4" stroke="#c8c8d4" stroke-width="0.45" stroke-linejoin="round">3.50 GiB</text>
<line x1="1500.4" y1="374.40" x2="1889.7" y2="374.40" stroke="#2c2f33" stroke-width="1"/>
<text x="1451.12" y="377.10" font-size="11.50" font-weight="normal" font-style="normal" fill="#c8c8d4" stroke="#c8c8d4" stroke-width="0.45" stroke-linejoin="round">3.25 GiB</text>
<line x1="1500.4" y1="400.30" x2="1889.7" y2="400.30" stroke="#2c2f33" stroke-width="1"/>
<text x="1467.10" y="403.00" font-size="11.50" font-weight="normal" font-style="normal" fill="#c8c8d4" stroke="#c8c8d4" stroke-width="0.45" stroke-linejoin="round">3 GiB</text>
<line x1="1564.80" y1="346" x2="1564.80" y2="407" stroke="#2c2f33" stroke-width="1"/>
<line x1="1629.60" y1="346" x2="1629.60" y2="407" stroke="#2c2f33" stroke-width="1"/>
<line x1="1694.40" y1="346" x2="1694.40" y2="407" stroke="#2c2f33" stroke-width="1"/>
<line x1="1759.30" y1="346" x2="1759.30" y2="407" stroke="#2c2f33" stroke-width="1"/>
<line x1="1824.10" y1="346" x2="1824.10" y2="407" stroke="#2c2f33" stroke-width="1"/>
<line x1="1889.70" y1="346" x2="1889.70" y2="407" stroke="#2c2f33" stroke-width="1"/>
<g clip-path="url(#cp13)">
<text x="1548.92" y="419.70" font-size="11.50" font-weight="normal" font-style="normal" fill="#c8c8d4" stroke="#c8c8d4" stroke-width="0.45" stroke-linejoin="round" textLength="30.10" lengthAdjust="spacingAndGlyphs">10:40</text>
</g>
<g clip-path="url(#cp13)">
<text x="1613.94" y="419.70" font-size="11.50" font-weight="normal" font-style="normal" fill="#c8c8d4" stroke="#c8c8d4" stroke-width="0.45" stroke-linejoin="round" textLength="29.68" lengthAdjust="spacingAndGlyphs">10:50</text>
</g>
<g clip-path="url(#cp13)">
<text x="1680.30" y="419.70" font-size="11.50" font-weight="normal" font-style="normal" fill="#c8c8d4" stroke="#c8c8d4" stroke-width="0.45" stroke-linejoin="round" textLength="26.59" lengthAdjust="spacingAndGlyphs">11:00</text>
</g>
<g clip-path="url(#cp13)">
<text x="1745.90" y="419.70" font-size="11.50" font-weight="normal" font-style="normal" fill="#c8c8d4" stroke="#c8c8d4" stroke-width="0.45" stroke-linejoin="round" textLength="25.23" lengthAdjust="spacingAndGlyphs">11:10</text>
</g>
<g clip-path="url(#cp13)">
<text x="1809.74" y="419.70" font-size="11.50" font-weight="normal" font-style="normal" fill="#c8c8d4" stroke="#c8c8d4" stroke-width="0.45" stroke-linejoin="round" textLength="27.12" lengthAdjust="spacingAndGlyphs">11:20</text>
</g>
<g clip-path="url(#cp13)">
<text x="1875.34" y="419.70" font-size="11.50" font-weight="normal" font-style="normal" fill="#c8c8d4" stroke="#c8c8d4" stroke-width="0.45" stroke-linejoin="round" textLength="27.12" lengthAdjust="spacingAndGlyphs">11:30</text>
</g>
<path d="M1500.40 395.40 L1515.30 395.40 L1517.40 388.40 L1523.60 388.40 L1525.20 389.30 L1530.40 389.30 L1531.40 394.10 L1542.90 394.10 L1544.50 396.20 L1554.90 396.20 L1556.40 397.30 L1572.60 397.30 L1574.60 398.50 L1578.30 398.50 L1579.90 397.30 L1590.80 397.30 L1592.90 396.40 L1596.50 395.40 L1604.30 395.40 L1606.10 350.40 L1610.00 350.40 L1611.10 351.50 L1612.60 350.40 L1617.30 350.40 L1619.40 389.50 L1622.00 389.50 L1624.10 386.30 L1627.70 386.30 L1629.80 387.70 L1631.40 386.30 L1637.10 386.30 L1639.20 387.40 L1643.40 387.40 L1645.40 392.40 L1650.60 392.40 L1652.20 396.40 L1679.30 396.40 L1680.80 395.40 L1726.60 395.50 L1727.70 396.40 L1744.70 396.40 L1745.80 397.30 L1756.10 397.30 L1757.80 396.30 L1760.00 396.30 L1761.60 397.40 L1764.30 397.40 L1766.00 396.40 L1770.30 396.40 L1772.00 395.40 L1782.90 395.40 L1784.60 394.30 L1799.90 394.30 L1801.30 353.30 L1808.10 353.30 L1809.20 354.00 L1811.30 354.40 L1813.50 394.30 L1826.10 394.30 L1827.50 396.40 L1832.10 396.40 L1833.70 395.40 L1835.90 395.40 L1837.00 396.40 L1884.60 396.40 L1886.20 395.40 L1889.70 395.40 L1889.70 403 L1500.40 403 Z" fill="#73bf69" fill-opacity="0.1"/>
<path d="M1500.40 395.40 L1515.30 395.40 L1517.40 388.40 L1523.60 388.40 L1525.20 389.30 L1530.40 389.30 L1531.40 394.10 L1542.90 394.10 L1544.50 396.20 L1554.90 396.20 L1556.40 397.30 L1572.60 397.30 L1574.60 398.50 L1578.30 398.50 L1579.90 397.30 L1590.80 397.30 L1592.90 396.40 L1596.50 395.40 L1604.30 395.40 L1606.10 350.40 L1610.00 350.40 L1611.10 351.50 L1612.60 350.40 L1617.30 350.40 L1619.40 389.50 L1622.00 389.50 L1624.10 386.30 L1627.70 386.30 L1629.80 387.70 L1631.40 386.30 L1637.10 386.30 L1639.20 387.40 L1643.40 387.40 L1645.40 392.40 L1650.60 392.40 L1652.20 396.40 L1679.30 396.40 L1680.80 395.40 L1726.60 395.50 L1727.70 396.40 L1744.70 396.40 L1745.80 397.30 L1756.10 397.30 L1757.80 396.30 L1760.00 396.30 L1761.60 397.40 L1764.30 397.40 L1766.00 396.40 L1770.30 396.40 L1772.00 395.40 L1782.90 395.40 L1784.60 394.30 L1799.90 394.30 L1801.30 353.30 L1808.10 353.30 L1809.20 354.00 L1811.30 354.40 L1813.50 394.30 L1826.10 394.30 L1827.50 396.40 L1832.10 396.40 L1833.70 395.40 L1835.90 395.40 L1837.00 396.40 L1884.60 396.40 L1886.20 395.40 L1889.70 395.40" fill="none" stroke="#73bf69" stroke-width="1.2" stroke-linejoin="round"/>
<rect x="15.50" y="472.5" width="624.00" height="197" fill="#181b1f" rx="4" stroke="#2a2c31" stroke-width="1"/>
<text x="23.53" y="492.20" font-size="13.00" font-weight="bold" font-style="normal" fill="#ccccdc" textLength="122.51" lengthAdjust="spacingAndGlyphs">Node Spec &amp; Status</text>
<line x1="158.7" y1="509.2" x2="158.7" y2="598.3" stroke="#2a2c31" stroke-width="1"/>
<line x1="293.7" y1="509.2" x2="293.7" y2="598.3" stroke="#2a2c31" stroke-width="1"/>
<line x1="428.7" y1="509.2" x2="428.7" y2="598.3" stroke="#2a2c31" stroke-width="1"/>
<line x1="563.7" y1="509.2" x2="563.7" y2="598.3" stroke="#2a2c31" stroke-width="1"/>
<line x1="24" y1="533.5" x2="632.5" y2="533.5" stroke="#2a2c31" stroke-width="1"/>
<line x1="24" y1="566.5" x2="632.5" y2="566.5" stroke="#2a2c31" stroke-width="1"/>
<line x1="24" y1="598.5" x2="632.5" y2="598.5" stroke="#2a2c31" stroke-width="1"/>
<text x="29.53" y="522.10" font-size="13.50" font-weight="normal" font-style="normal" fill="#9d9da8" stroke="#9d9da8" stroke-width="0.3" stroke-linejoin="round" textLength="32.40" lengthAdjust="spacingAndGlyphs">Node</text>
<text x="260.91" y="522.10" font-size="13.50" font-weight="normal" font-style="normal" fill="#9d9da8" stroke="#9d9da8" stroke-width="0.3" stroke-linejoin="round" textLength="27.12" lengthAdjust="spacingAndGlyphs">CPU</text>
<text x="392.41" y="522.10" font-size="13.50" font-weight="normal" font-style="normal" fill="#9d9da8" stroke="#9d9da8" stroke-width="0.3" stroke-linejoin="round" textLength="30.63" lengthAdjust="spacingAndGlyphs">Mem</text>
<text x="531.10" y="522.10" font-size="13.50" font-weight="normal" font-style="normal" fill="#9d9da8" stroke="#9d9da8" stroke-width="0.3" stroke-linejoin="round" textLength="26.31" lengthAdjust="spacingAndGlyphs">Max</text>
<clipPath id="tc1"><rect x="24" y="530" width="134.2" height="70"/></clipPath>
<g clip-path="url(#tc1)">
<text x="29.32" y="554.60" font-size="14.20" font-weight="normal" font-style="normal" fill="#ccccdc" textLength="129.11" lengthAdjust="spacingAndGlyphs">ip-10-0-2-80.ap-nort</text>
<text x="29.36" y="586.70" font-size="14.20" font-weight="normal" font-style="normal" fill="#ccccdc" textLength="132.25" lengthAdjust="spacingAndGlyphs">ip-10-0-3-191.ap-nort</text>
</g>
<text x="243.49" y="554.60" font-size="14.00" font-weight="normal" font-style="normal" fill="#ccccdc" textLength="44.89" lengthAdjust="spacingAndGlyphs">1930 m</text>
<text x="370.90" y="554.60" font-size="14.00" font-weight="normal" font-style="normal" fill="#ccccdc" textLength="52.09" lengthAdjust="spacingAndGlyphs">3.22 GiB</text>
<text x="544.70" y="554.60" font-size="14.00" font-weight="normal" font-style="normal" fill="#ccccdc" textLength="13.33" lengthAdjust="spacingAndGlyphs">17</text>
<text x="243.49" y="586.70" font-size="14.00" font-weight="normal" font-style="normal" fill="#ccccdc" textLength="44.89" lengthAdjust="spacingAndGlyphs">1930 m</text>
<text x="370.90" y="586.70" font-size="14.00" font-weight="normal" font-style="normal" fill="#ccccdc" textLength="52.09" lengthAdjust="spacingAndGlyphs">3.22 GiB</text>
<text x="544.70" y="586.70" font-size="14.00" font-weight="normal" font-style="normal" fill="#ccccdc" textLength="13.33" lengthAdjust="spacingAndGlyphs">17</text>
<rect x="24" y="651" width="609" height="11" fill="#25272c"/>
<rect x="27" y="654" width="452" height="6" fill="#5b5d63" rx="3"/>
<rect x="648.50" y="472.5" width="307.50" height="197" fill="#181b1f" rx="4" stroke="#2a2c31" stroke-width="1"/>
<text x="656.88" y="491.60" font-size="12.80" font-weight="bold" font-style="normal" fill="#ccccdc" textLength="84.47" lengthAdjust="spacingAndGlyphs">CPU Usage %</text>
<text x="655.81" y="533.60" font-size="22.50" font-weight="normal" font-style="normal" fill="#ccccdc" textLength="293.30" lengthAdjust="spacingAndGlyphs">ip-10-0-3-191.ap-northeas...</text>
<rect x="656.60" y="542.2" width="216.30" height="38.6" fill="#242529" rx="2.5"/>
<rect x="657.20" y="542.4000000000001" width="3.4" height="38.2" fill="#73bf69" rx="1.7" fill-opacity="0.8"/>
<text x="884.23" y="567.70" font-size="20.50" font-weight="normal" font-style="normal" fill="#73bf69" stroke="#73bf69" stroke-width="0.4" stroke-linejoin="round" textLength="40.68" lengthAdjust="spacingAndGlyphs">1.58</text>
<text x="926.36" y="567.70" font-size="16.00" font-weight="normal" font-style="normal" fill="#73bf69" stroke="#73bf69" stroke-width="0.3" stroke-linejoin="round" textLength="12.47" lengthAdjust="spacingAndGlyphs">%</text>
<text x="655.77" y="615.00" font-size="22.50" font-weight="normal" font-style="normal" fill="#ccccdc" textLength="288.14" lengthAdjust="spacingAndGlyphs">ip-10-0-2-80.ap-northeas...</text>
<rect x="656.60" y="623.2" width="216.40" height="38.6" fill="#242529" rx="2.5"/>
<rect x="657.20" y="623.4000000000001" width="3.4" height="38.2" fill="#73bf69" rx="1.7" fill-opacity="0.8"/>
<text x="886.93" y="648.10" font-size="20.50" font-weight="normal" font-style="normal" fill="#73bf69" stroke="#73bf69" stroke-width="0.4" stroke-linejoin="round" textLength="37.83" lengthAdjust="spacingAndGlyphs">2.10</text>
<text x="926.36" y="648.10" font-size="16.00" font-weight="normal" font-style="normal" fill="#73bf69" stroke="#73bf69" stroke-width="0.3" stroke-linejoin="round" textLength="12.47" lengthAdjust="spacingAndGlyphs">%</text>
<rect x="965.00" y="472.5" width="307.50" height="197" fill="#181b1f" rx="4" stroke="#2a2c31" stroke-width="1"/>
<text x="973.39" y="491.60" font-size="12.80" font-weight="bold" font-style="normal" fill="#ccccdc" textLength="96.26" lengthAdjust="spacingAndGlyphs">CPU Request %</text>
<text x="972.31" y="533.60" font-size="22.50" font-weight="normal" font-style="normal" fill="#ccccdc" textLength="294.11" lengthAdjust="spacingAndGlyphs">ip-10-0-3-191.ap-northeas...</text>
<rect x="973.10" y="542.2" width="213.00" height="38.6" fill="#242529" rx="2.5"/>
<rect x="973.10" y="542.2" width="152.00" height="38.6" fill="#181b1f" rx="2.5"/>
<rect x="973.10" y="542.2" width="152.00" height="38.6" fill="rgba(250,222,42,0.35)" rx="2.5"/>
<path d="M1121.90 542.70 H1122.50 Q1124.50 542.70 1124.50 544.70 V578.30 Q1124.50 580.30 1122.50 580.30 H1121.90" fill="none" stroke="#fade2a" stroke-width="1.1" stroke-opacity="0.85"/>
<text x="1198.91" y="567.70" font-size="20.50" font-weight="normal" font-style="normal" fill="#fade2a" stroke="#fade2a" stroke-width="0.4" stroke-linejoin="round" textLength="42.49" lengthAdjust="spacingAndGlyphs">72.5</text>
<text x="1242.86" y="567.70" font-size="16.00" font-weight="normal" font-style="normal" fill="#fade2a" stroke="#fade2a" stroke-width="0.3" stroke-linejoin="round" textLength="12.47" lengthAdjust="spacingAndGlyphs">%</text>
<text x="972.27" y="615.00" font-size="22.50" font-weight="normal" font-style="normal" fill="#ccccdc" textLength="287.83" lengthAdjust="spacingAndGlyphs">ip-10-0-2-80.ap-northeas...</text>
<rect x="973.10" y="623.2" width="218.60" height="38.6" fill="#242529" rx="2.5"/>
<rect x="973.10" y="623.2" width="125.80" height="38.6" fill="#181b1f" rx="2.5"/>
<rect x="973.10" y="623.2" width="125.80" height="38.6" fill="rgba(87,148,242,0.35)" rx="2.5"/>
<path d="M1095.70 623.70 H1096.30 Q1098.30 623.70 1098.30 625.70 V659.30 Q1098.30 661.30 1096.30 661.30 H1095.70" fill="none" stroke="#5794f2" stroke-width="1.1" stroke-opacity="0.85"/>
<text x="1203.53" y="648.10" font-size="20.50" font-weight="normal" font-style="normal" fill="#5794f2" stroke="#5794f2" stroke-width="0.4" stroke-linejoin="round" textLength="37.93" lengthAdjust="spacingAndGlyphs">60.1</text>
<text x="1242.86" y="648.10" font-size="16.00" font-weight="normal" font-style="normal" fill="#5794f2" stroke="#5794f2" stroke-width="0.3" stroke-linejoin="round" textLength="12.47" lengthAdjust="spacingAndGlyphs">%</text>
<rect x="1281.50" y="472.5" width="307.50" height="197" fill="#181b1f" rx="4" stroke="#2a2c31" stroke-width="1"/>
<text x="1289.51" y="491.60" font-size="12.80" font-weight="bold" font-style="normal" fill="#ccccdc" textLength="88.24" lengthAdjust="spacingAndGlyphs">Mem Usage %</text>
<text x="1288.81" y="533.60" font-size="22.50" font-weight="normal" font-style="normal" fill="#ccccdc" textLength="292.69" lengthAdjust="spacingAndGlyphs">ip-10-0-3-191.ap-northeas...</text>
<rect x="1289.60" y="542.2" width="212.50" height="38.6" fill="#242529" rx="2.5"/>
<rect x="1289.60" y="542.2" width="145.20" height="38.6" fill="#181b1f" rx="2.5"/>
<rect x="1289.60" y="542.2" width="145.20" height="38.6" fill="rgba(250,222,42,0.35)" rx="2.5"/>
<path d="M1431.60 542.70 H1432.20 Q1434.20 542.70 1434.20 544.70 V578.30 Q1434.20 580.30 1432.20 580.30 H1431.60" fill="none" stroke="#fade2a" stroke-width="1.1" stroke-opacity="0.85"/>
<text x="1514.58" y="567.70" font-size="20.50" font-weight="normal" font-style="normal" fill="#fade2a" stroke="#fade2a" stroke-width="0.4" stroke-linejoin="round" textLength="43.57" lengthAdjust="spacingAndGlyphs">69.7</text>
<text x="1559.36" y="567.70" font-size="16.00" font-weight="normal" font-style="normal" fill="#fade2a" stroke="#fade2a" stroke-width="0.3" stroke-linejoin="round" textLength="12.47" lengthAdjust="spacingAndGlyphs">%</text>
<text x="1288.77" y="615.00" font-size="22.50" font-weight="normal" font-style="normal" fill="#ccccdc" textLength="287.63" lengthAdjust="spacingAndGlyphs">ip-10-0-2-80.ap-northeas...</text>
<rect x="1289.60" y="623.2" width="211.70" height="38.6" fill="#242529" rx="2.5"/>
<rect x="1289.60" y="623.2" width="51.30" height="38.6" fill="#181b1f" rx="2.5"/>
<rect x="1289.60" y="623.2" width="51.30" height="38.6" fill="rgba(115,191,105,0.35)" rx="2.5"/>
<path d="M1337.70 623.70 H1338.30 Q1340.30 623.70 1340.30 625.70 V659.30 Q1340.30 661.30 1338.30 661.30 H1337.70" fill="none" stroke="#73bf69" stroke-width="1.1" stroke-opacity="0.85"/>
<text x="1514.17" y="648.10" font-size="20.50" font-weight="normal" font-style="normal" fill="#73bf69" stroke="#73bf69" stroke-width="0.4" stroke-linejoin="round" textLength="43.81" lengthAdjust="spacingAndGlyphs">24.8</text>
<text x="1559.36" y="648.10" font-size="16.00" font-weight="normal" font-style="normal" fill="#73bf69" stroke="#73bf69" stroke-width="0.3" stroke-linejoin="round" textLength="12.47" lengthAdjust="spacingAndGlyphs">%</text>
<rect x="1598.00" y="472.5" width="307.50" height="197" fill="#181b1f" rx="4" stroke="#2a2c31" stroke-width="1"/>
<text x="1606.02" y="491.60" font-size="12.80" font-weight="bold" font-style="normal" fill="#ccccdc" textLength="99.41" lengthAdjust="spacingAndGlyphs">Mem Request %</text>
<text x="1605.31" y="533.60" font-size="22.50" font-weight="normal" font-style="normal" fill="#ccccdc" textLength="293.30" lengthAdjust="spacingAndGlyphs">ip-10-0-3-191.ap-northeas...</text>
<rect x="1606.10" y="542.2" width="210.90" height="38.6" fill="#242529" rx="2.5"/>
<rect x="1606.10" y="542.2" width="170.60" height="38.6" fill="#181b1f" rx="2.5"/>
<rect x="1606.10" y="542.2" width="170.60" height="38.6" fill="rgba(250,222,42,0.35)" rx="2.5"/>
<path d="M1773.50 542.70 H1774.10 Q1776.10 542.70 1776.10 544.70 V578.30 Q1776.10 580.30 1774.10 580.30 H1773.50" fill="none" stroke="#fade2a" stroke-width="1.1" stroke-opacity="0.85"/>
<text x="1829.92" y="567.70" font-size="20.50" font-weight="normal" font-style="normal" fill="#fade2a" stroke="#fade2a" stroke-width="0.4" stroke-linejoin="round" textLength="44.76" lengthAdjust="spacingAndGlyphs">82.2</text>
<text x="1875.86" y="567.70" font-size="16.00" font-weight="normal" font-style="normal" fill="#fade2a" stroke="#fade2a" stroke-width="0.3" stroke-linejoin="round" textLength="12.47" lengthAdjust="spacingAndGlyphs">%</text>
<text x="1605.27" y="615.00" font-size="22.50" font-weight="normal" font-style="normal" fill="#ccccdc" textLength="288.14" lengthAdjust="spacingAndGlyphs">ip-10-0-2-80.ap-northeas...</text>
<rect x="1606.10" y="623.2" width="210.90" height="38.6" fill="#242529" rx="2.5"/>
<rect x="1606.10" y="623.2" width="51.90" height="38.6" fill="#181b1f" rx="2.5"/>
<rect x="1606.10" y="623.2" width="51.90" height="38.6" fill="rgba(87,148,242,0.35)" rx="2.5"/>
<path d="M1654.80 623.70 H1655.40 Q1657.40 623.70 1657.40 625.70 V659.30 Q1657.40 661.30 1655.40 661.30 H1654.80" fill="none" stroke="#5794f2" stroke-width="1.1" stroke-opacity="0.85"/>
<text x="1830.17" y="648.10" font-size="20.50" font-weight="normal" font-style="normal" fill="#5794f2" stroke="#5794f2" stroke-width="0.4" stroke-linejoin="round" textLength="43.98" lengthAdjust="spacingAndGlyphs">25.4</text>
<text x="1875.86" y="648.10" font-size="16.00" font-weight="normal" font-style="normal" fill="#5794f2" stroke="#5794f2" stroke-width="0.3" stroke-linejoin="round" textLength="12.47" lengthAdjust="spacingAndGlyphs">%</text>
<line x1="1920.5" y1="1" x2="1920.5" y2="809" stroke="#1c1d22" stroke-width="1"/>
</svg>
</body></html>
